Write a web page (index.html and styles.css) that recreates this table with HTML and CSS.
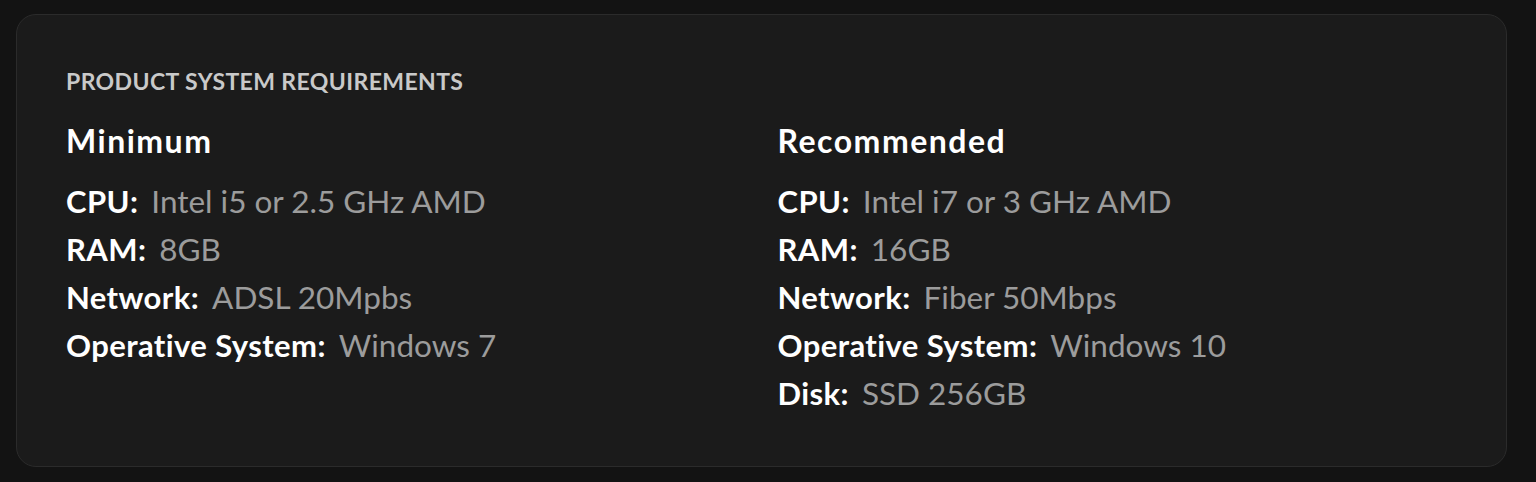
FILE: index.html
```html
<!DOCTYPE html>
<html lang="en">
<head>
<meta charset="utf-8">
<title>Product System Requirements</title>
<link rel="stylesheet" href="styles.css">
</head>
<body>
<main class="page">
  <section class="card">
    <h2 class="title">PRODUCT SYSTEM REQUIREMENTS</h2>
    <div class="cols">
      <div class="col">
        <h3 class="heading">Minimum</h3>
        <ul class="specs">
          <li><span class="label">CPU:</span><span class="value">Intel i5 or 2.5 GHz AMD</span></li>
          <li><span class="label">RAM:</span><span class="value">8GB</span></li>
          <li><span class="label">Network:</span><span class="value">ADSL 20Mpbs</span></li>
          <li><span class="label">Operative System:</span><span class="value">Windows 7</span></li>
        </ul>
      </div>
      <div class="col">
        <h3 class="heading">Recommended</h3>
        <ul class="specs">
          <li><span class="label">CPU:</span><span class="value">Intel i7 or 3 GHz AMD</span></li>
          <li><span class="label">RAM:</span><span class="value">16GB</span></li>
          <li><span class="label">Network:</span><span class="value">Fiber 50Mbps</span></li>
          <li><span class="label">Operative System:</span><span class="value">Windows 10</span></li>
          <li><span class="label">Disk:</span><span class="value">SSD 256GB</span></li>
        </ul>
      </div>
    </div>
  </section>
</main>
</body>
</html>
```

FILE: styles.css
```css
html, body {
  margin: 0;
  padding: 0;
  background: #131313;
}
body {
  font-family: Lato, "Noto Sans", sans-serif;
  color: #ffffff;
}
.page {
  padding: 14px 29px 15px 16px;
}
.card {
  box-sizing: border-box;
  height: 453px;
  background: #1b1b1b;
  border: 1px solid #2b2b2b;
  border-radius: 20px;
  padding: 53px 49px 0 49px;
}
.title {
  margin: 0;
  font-size: 23px;
  line-height: 26px;
  font-weight: 700;
  color: #c9c9c9;
  letter-spacing: 0.4px;
}
.cols {
  display: grid;
  grid-template-columns: 1fr 1fr;
  column-gap: 32px;
  margin-top: 29px;
}
.heading {
  margin: 0;
  font-size: 32px;
  line-height: 36px;
  font-weight: 700;
  color: #ffffff;
  letter-spacing: 1.5px;
}
.specs {
  list-style: none;
  margin: 18px 0 0 0;
  padding: 0;
}
.specs li {
  font-size: 31.5px;
  line-height: 48px;
  white-space: nowrap;
}
.label {
  font-size: 31px;
  font-weight: 700;
  color: #ffffff;
  letter-spacing: 0.4px;
}
.value {
  margin-left: 13px;
  color: #9c9c9c;
}
```
